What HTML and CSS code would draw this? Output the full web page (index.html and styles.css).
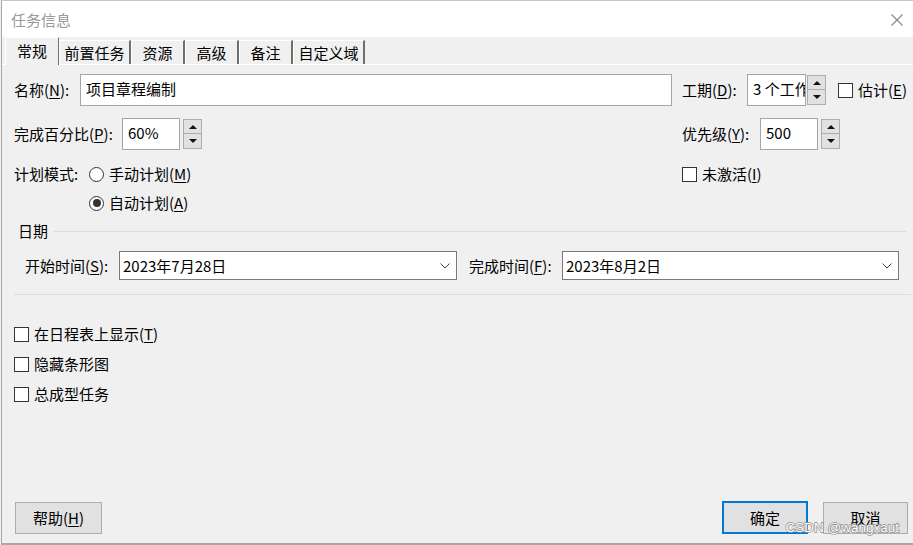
FILE: index.html
```html
<!DOCTYPE html>
<html lang="zh-CN">
<head>
<meta charset="utf-8">
<title>任务信息</title>
<link rel="stylesheet" href="styles.css">
</head>
<body>
<div class="window">
  <div class="titlebar">
    <span class="title">任务信息</span>
    <svg class="close" width="12" height="12" viewBox="0 0 12 12"><path d="M0.5 0.5L11.5 11.5M11.5 0.5L0.5 11.5" stroke="#8a8a8a" stroke-width="1.2" fill="none"/></svg>
  </div>
  <div class="tabs">
    <div class="tab active t2">常规</div>
    <div class="tab t4">前置任务</div>
    <div class="tab t2">资源</div>
    <div class="tab t2">高级</div>
    <div class="tab t2">备注</div>
    <div class="tab t4">自定义域</div>
  </div>
  <div class="panel">
    <div class="grid row1">
      <div class="cell">
        <span class="lbl w-name">名称(<u>N</u>):</span>
        <div class="input name-input">项目章程编制</div>
      </div>
      <div class="cell">
        <span class="lbl w-dur">工期(<u>D</u>):</span>
        <div class="input dur-input">3 个工作日</div>
        <div class="spin ml1"><div class="up"><i class="tri-up"></i></div><div class="down"><i class="tri-down"></i></div></div>
        <span class="check ml12"></span><span class="clabel">估计(<u>E</u>)</span>
      </div>
    </div>
    <div class="grid row2">
      <div class="cell">
        <span class="lbl w-pct">完成百分比(<u>P</u>):</span>
        <div class="input num-input">60%</div>
        <div class="spin ml3"><div class="up"><i class="tri-up"></i></div><div class="down"><i class="tri-down"></i></div></div>
      </div>
      <div class="cell">
        <span class="lbl w-pri">优先级(<u>Y</u>):</span>
        <div class="input num-input">500</div>
        <div class="spin ml3"><div class="up"><i class="tri-up"></i></div><div class="down"><i class="tri-down"></i></div></div>
      </div>
    </div>
    <div class="grid row3">
      <div class="cell">
        <span class="lbl w-mode">计划模式:</span>
        <span class="radio"></span><span class="clabel">手动计划(<u>M</u>)</span>
      </div>
      <div class="cell">
        <span class="check"></span><span class="clabel">未激活(<u>I</u>)</span>
      </div>
    </div>
    <div class="row4">
      <span class="radio checked"></span><span class="clabel">自动计划(<u>A</u>)</span>
    </div>
    <div class="group-head">
      <span class="group-title">日期</span>
      <span class="group-line"></span>
    </div>
    <div class="date-row">
      <span class="lbl w-start">开始时间(<u>S</u>):</span>
      <div class="combo c-start"><span>2023年7月28日</span>
        <svg class="chev" width="10" height="6" viewBox="0 0 10 6"><path d="M0.5 0.5L5 5L9.5 0.5" stroke="#444" stroke-width="1" fill="none"/></svg>
      </div>
      <span class="lbl w-end">完成时间(<u>F</u>):</span>
      <div class="combo c-end"><span>2023年8月2日</span>
        <svg class="chev" width="10" height="6" viewBox="0 0 10 6"><path d="M0.5 0.5L5 5L9.5 0.5" stroke="#444" stroke-width="1" fill="none"/></svg>
      </div>
    </div>
    <div class="sep"></div>
    <div class="opts">
      <div class="opt"><span class="check"></span><span class="clabel">在日程表上显示(<u>T</u>)</span></div>
      <div class="opt"><span class="check"></span><span class="clabel">隐藏条形图</span></div>
      <div class="opt"><span class="check"></span><span class="clabel">总成型任务</span></div>
    </div>
    <div class="buttons">
      <div class="btn help">帮助(<u>H</u>)</div>
      <div class="spacer"></div>
      <div class="btn ok">确定</div>
      <div class="btn cancel">取消</div>
      <span class="watermark">CSDN @wangxaut</span>
    </div>
  </div>
</div>
</body>
</html>
```

FILE: styles.css
```css
* { box-sizing: border-box; }
html, body { margin: 0; padding: 0; }
body {
  width: 913px;
  height: 545px;
  overflow: hidden;
  background: #f0f0f0;
  font-family: "Noto Sans CJK SC", "Microsoft YaHei", sans-serif;
  font-size: 15px;
  color: #000;
}
u { text-decoration: underline; text-underline-offset: 2px; text-decoration-thickness: 1px; }
.window {
  width: 913px;
  height: 545px;
  margin-left: 1px;
  border-left: 1px solid #a8a8a8;
  border-bottom: 2px solid #a8a8a8;
  border-top: 1px solid #c8c8c8;
  display: flex;
  flex-direction: column;
}
.titlebar {
  height: 36px;
  background: #fff;
  display: flex;
  align-items: center;
  padding-left: 9px;
  flex-shrink: 0;
}
.title { color: #999; line-height: 20px; margin-top: 2px; }
.close { margin-left: auto; margin-right: 11px; margin-top: 1px; }

.tabs {
  display: flex;
  align-items: flex-end;
  height: 28px;
  padding-left: 3px;
  border-bottom: 1px solid #fff;
  flex-shrink: 0;
}
.tab {
  height: 24px;
  line-height: 24px;
  text-align: center;
  border-left: 1px solid #fff;
  border-top: 1px solid #fff;
  border-right: 2px solid #6e6e6e;
  background: #f0f0f0;
  white-space: nowrap;
}
.t2 { width: 54px; }
.t4 { width: 72px; }
.tab.active {
  height: 28px;
  line-height: 26px;
  border-right: 1px solid #6e6e6e;
  margin-bottom: -1px;
}

.panel {
  flex: 1;
  display: flex;
  flex-direction: column;
  padding-left: 12px;
}
.grid {
  display: grid;
  grid-template-columns: 668px 1fr;
}
.cell { display: flex; align-items: center; }
.lbl { line-height: 20px; white-space: nowrap; flex-shrink: 0; }
.w-name { width: 66px; }
.w-dur { width: 65px; }
.w-pct { width: 108px; }
.w-pri { width: 78px; }
.w-mode { width: 75px; }
.w-start { width: 94px; margin-left: 11px; }
.w-end { width: 93px; margin-left: 12px; }

.input {
  background: #fff;
  border: 1px solid #a5a5a5;
  height: 32px;
  line-height: 28px;
  padding-left: 5px;
  white-space: nowrap;
  overflow: hidden;
}
.row1 { margin-top: 9px; }
.name-input { width: 592px; }
.dur-input { width: 59px; }
.row2 { margin-top: 12px; }
.num-input { width: 58px; }

.spin {
  width: 19px;
  height: 30px;
  display: flex;
  flex-direction: column;
}
.spin .up, .spin .down {
  height: 15px;
  background: #e1e1e1;
  border: 1px solid #adadad;
  display: flex;
  align-items: center;
  justify-content: center;
}
.spin .down { border-top: none; }
.tri-up { width: 0; height: 0; border-left: 4px solid transparent; border-right: 4px solid transparent; border-bottom: 4px solid #111; }
.tri-down { width: 0; height: 0; border-left: 4px solid transparent; border-right: 4px solid transparent; border-top: 4px solid #111; }
.ml1 { margin-left: 1px; }
.ml3 { margin-left: 3px; }
.ml12 { margin-left: 12px; }

.check {
  width: 15px; height: 15px;
  background: #fff;
  border: 1px solid #333;
  flex-shrink: 0;
  display: inline-block;
}
.clabel { margin-left: 5px; line-height: 20px; white-space: nowrap; }
.radio {
  width: 15px; height: 15px;
  border-radius: 50%;
  background: #fff;
  border: 1px solid #333;
  flex-shrink: 0;
  display: inline-flex;
  align-items: center;
  justify-content: center;
}
.radio.checked::after {
  content: "";
  width: 8px; height: 8px;
  border-radius: 50%;
  background: #333;
}
.row3 { margin-top: 13px; height: 22px; }
.row4 { margin-top: 7px; height: 22px; display: flex; align-items: center; padding-left: 75px; }

.group-head {
  margin-top: 8px;
  height: 18px;
  display: flex;
  align-items: center;
  padding-left: 4px;
}
.group-title { line-height: 18px; }
.group-line { flex: 1; height: 1px; background: #dcdcdc; margin-left: 6px; margin-right: 8px; margin-top: 1px; }

.date-row {
  margin-top: 11px;
  display: flex;
  align-items: center;
}
.combo {
  height: 29px;
  background: #fff;
  border: 1px solid #7a7a7a;
  display: flex;
  align-items: center;
  padding-left: 3px;
  padding-right: 6px;
  line-height: 20px;
}
.c-start { width: 338px; }
.c-end { width: 337px; }
.chev { margin-left: auto; }

.sep { margin-top: 14px; height: 1px; background: #dcdcdc; margin-right: 3px; }

.opts { margin-top: 24px; display: flex; flex-direction: column; }
.opt { height: 30px; display: flex; align-items: center; }

.buttons {
  margin-top: auto;
  margin-bottom: 9px;
  display: flex;
  align-items: center;
  position: relative;
  padding-right: 6px;
}
.btn {
  height: 32px;
  background: #e1e1e1;
  border: 1px solid #adadad;
  display: flex;
  align-items: center;
  justify-content: center;
  line-height: 20px;
}
.help { width: 87px; margin-left: 1px; }
.spacer { flex: 1; }
.ok { width: 86px; border: 2px solid #0078d7; height: 33px; }
.cancel { width: 85px; margin-left: 15px; }
.watermark {
  position: absolute;
  right: 15px;
  bottom: -1px;
  font-family: "Liberation Sans", Arial, sans-serif;
  font-size: 13.5px;
  color: #fff;
  -webkit-text-stroke: 1.4px #8c8c8c;
  paint-order: stroke fill;
}
```
